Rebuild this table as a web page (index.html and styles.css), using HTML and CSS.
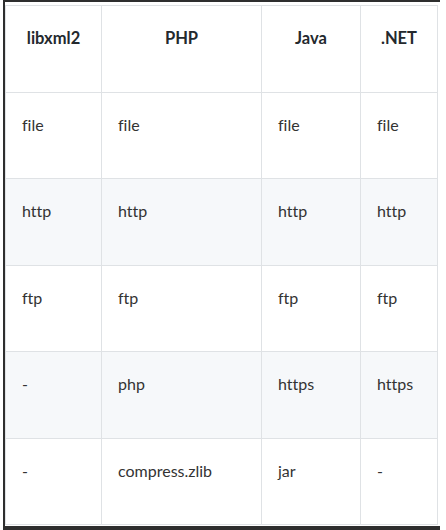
FILE: index.html
```html
<!DOCTYPE html>
<html>
<head>
<meta charset="utf-8">
<link rel="stylesheet" href="styles.css">
</head>
<body>
<div class="frame">
  <table class="grid">
    <colgroup>
      <col class="c1"><col class="c2"><col class="c3"><col class="c4">
    </colgroup>
    <thead>
      <tr><th>libxml2</th><th>PHP</th><th>Java</th><th>.NET</th></tr>
    </thead>
    <tbody>
      <tr><td>file</td><td>file</td><td>file</td><td>file</td></tr>
      <tr><td>http</td><td>http</td><td>http</td><td>http</td></tr>
      <tr><td>ftp</td><td>ftp</td><td>ftp</td><td>ftp</td></tr>
      <tr><td>-</td><td>php</td><td>https</td><td>https</td></tr>
      <tr><td>-</td><td>compress.zlib</td><td>jar</td><td>-</td></tr>
    </tbody>
  </table>
</div>
</body>
</html>
```

FILE: styles.css
```css
html, body {
  margin: 0;
  padding: 0;
  background: #ffffff;
}

.frame {
  margin-left: 3px;
  width: 435px;
  height: 521px;
  border-top: 2px solid #2e2e2e;
  border-left: 2px solid #2e2e2e;
  border-bottom: 4px solid #2e2e2e;
  padding-top: 3px;
  box-sizing: content-box;
  font-family: "Lato", "Open Sans", sans-serif;
  font-size: 16px;
  font-variant-ligatures: none;
  color: #24292e;
}

.grid {
  border-collapse: collapse;
  table-layout: fixed;
  width: 432px;
}

.c1 { width: 96px; }
.c2 { width: 160px; }
.c3 { width: 99px; }
.c4 { width: 77px; }

.grid th,
.grid td {
  border: 1px solid #dfe2e5;
  padding: 20px 16px 41.5px;
  line-height: 24px;
  height: 24px;
  vertical-align: top;
}

.grid th {
  font-weight: 700;
  text-align: center;
  font-size: 16.5px;
}

.grid td {
  text-align: left;
  color: #333333;
}

.grid tbody tr:nth-child(even) {
  background: #f6f8fa;
}
```
